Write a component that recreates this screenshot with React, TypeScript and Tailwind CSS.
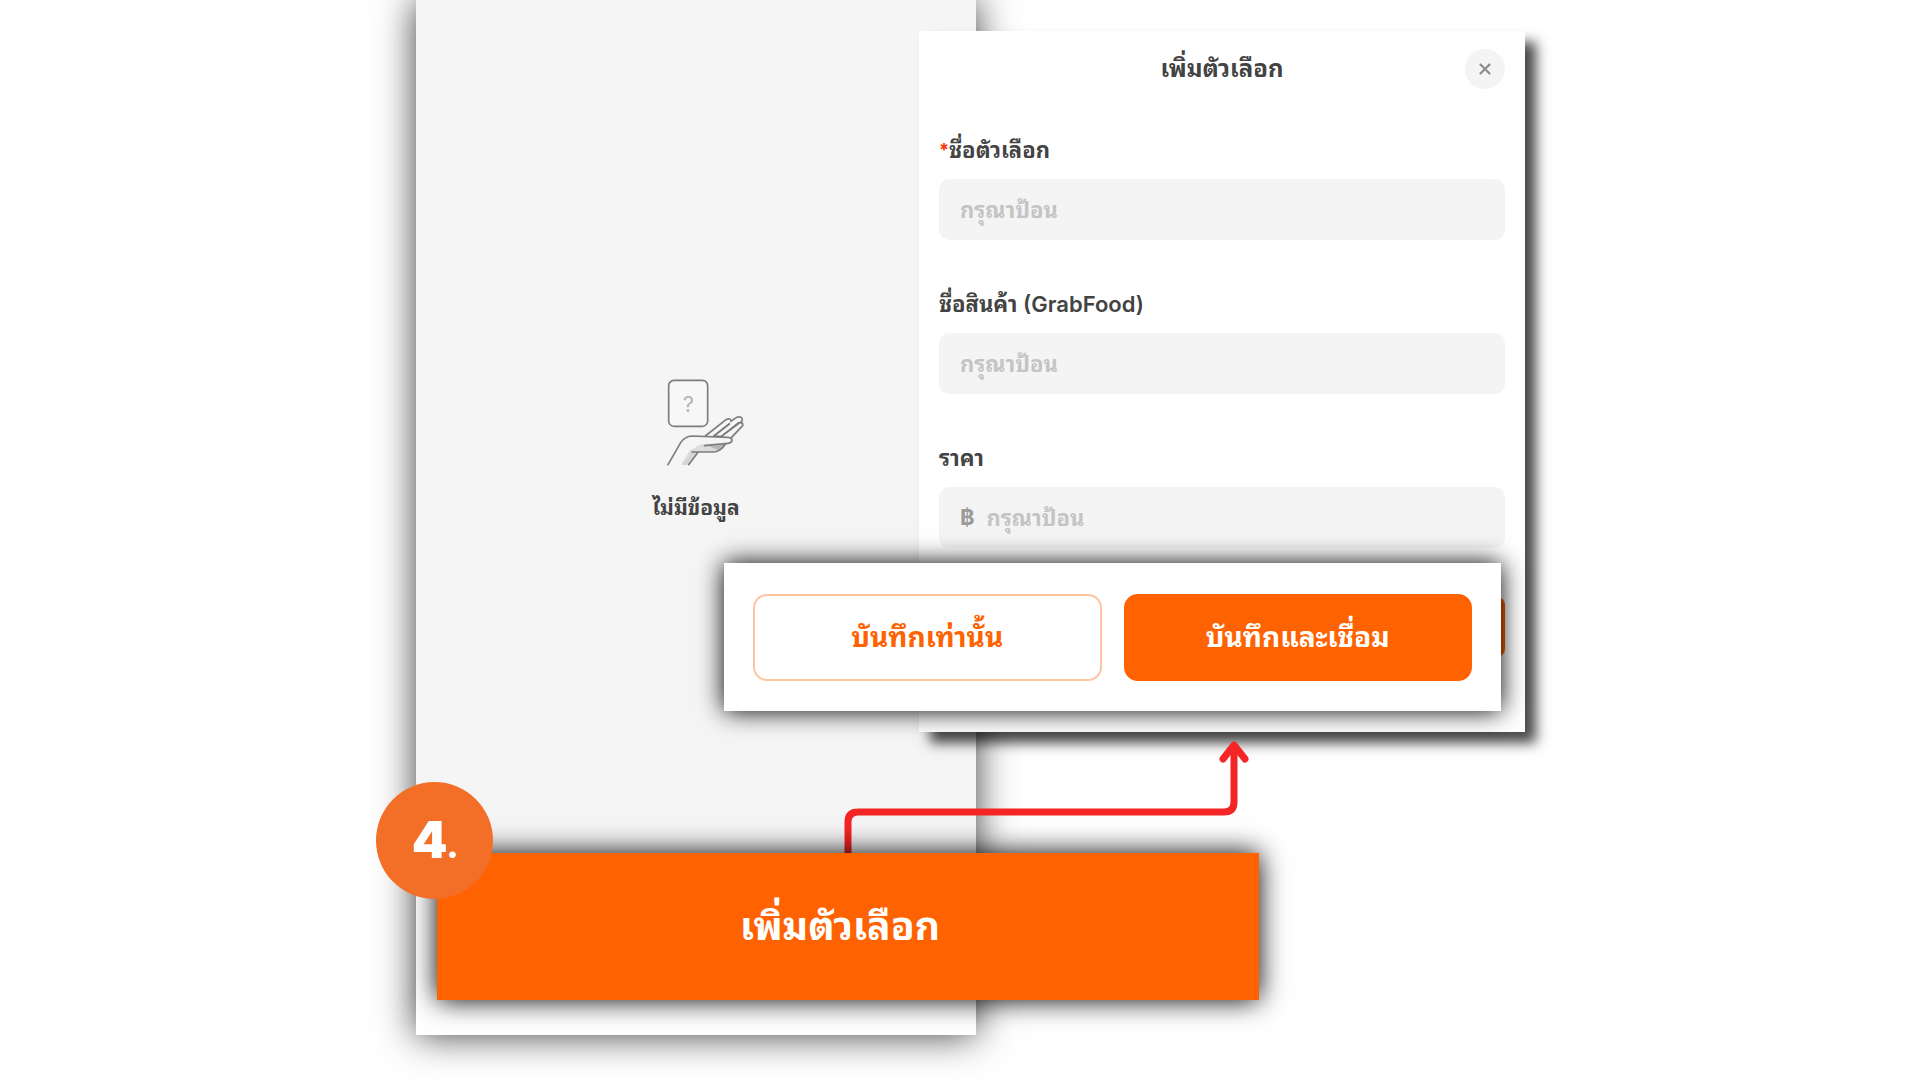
import { X } from 'lucide-react'

const fields = [
  { id: 'option-name', label: 'ชื่อตัวเลือก', required: true },
  { id: 'grabfood-name', label: 'ชื่อสินค้า', note: ' (GrabFood)' },
  { id: 'price', label: 'ราคา', prefix: '฿' },
]

function EmptyIcon() {
  return (
    <svg className="h-[137px] w-[140px]" viewBox="80 0 420 411" fill="none" aria-hidden="true">
      <circle cx="290" cy="206" r="194" fill="#f5f5f5" stroke="#f3f3f3" strokeWidth="3" />
      <rect x="208" y="91" width="117" height="138" rx="16" fill="#f7f7f7" stroke="#7d7d7d" strokeWidth="5" />
      <text x="267" y="186" textAnchor="middle" fontSize="66" fill="#b5b5b5" fontFamily="Inter, sans-serif">
        ?
      </text>
      {/* shading under the palm and on the wrist */}
      <path d="M286 294Q300 280 330 281L384 281Q370 304 344 306H280L262 344H246L272 300Z" fill="#dcdcdc" />
      <path d="M280 306H296L268 344H246Z" fill="#d6d6d6" />
      <path d="M330 288L378 284L358 300Q344 296 330 288Z" fill="#b5b5b5" />
      {/* fingers */}
      <g stroke="#7d7d7d" strokeWidth="5" strokeLinecap="round" strokeLinejoin="round">
        <path d="M318 258L380 209Q392 203 396 213Q396 218 390 222L342 259" fill="#f7f7f7" />
        <path d="M396 213L412 202Q426 197 429 209Q429 214 422 218L366 259L344 258L390 222" fill="#f7f7f7" />
        <path d="M424 217Q432 219 430 227L396 263M366 259L418 218" />
        <path d="M206 344L244 278Q256 259 278 258L386 262Q398 263 398 271Q397 279 386 280L316 287" />
        <path d="M378 282Q364 304 344 306H278M296 307L268 344" />
      </g>
    </svg>
  )
}

function ConnectorArrow() {
  return (
    <svg
      className="pointer-events-none absolute left-[407px] top-[738px] z-10 h-[120px] w-[440px]"
      viewBox="0 0 440 120"
      fill="none"
      stroke="#f42525"
      strokeWidth="7"
      strokeLinecap="round"
      strokeLinejoin="round"
      aria-hidden="true"
    >
      <path d="M25 120V84Q25 74 35 74H401Q411 74 411 64V8" />
      <path d="M400 21L411 7L422 21" />
    </svg>
  )
}

function OptionForm() {
  return (
    <form
      className="relative mt-[31px] w-[606px] -ml-[57px] self-start bg-white px-5 pb-[75px] pt-[18px] shadow-[11px_11px_12px_rgba(0,0,0,0.72)]"
      onSubmit={(e) => e.preventDefault()}
    >
      <header className="grid grid-cols-[40px_1fr_40px] items-center">
        <h2 className="col-start-2 text-center text-2xl font-bold">เพิ่มตัวเลือก</h2>
        <button
          type="button"
          aria-label="ปิด"
          className="flex size-10 items-center justify-center rounded-full bg-[#f4f4f4] text-[#8f8f8f]"
        >
          <X className="size-[18px]" strokeWidth={3} />
        </button>
      </header>

      <div className="mt-[47px] flex flex-col gap-[50px]">
        {fields.map((field) => (
          <div key={field.id} className="flex flex-col gap-[15px]">
            <label htmlFor={field.id} className="flex h-7 items-center whitespace-pre text-[22px] font-bold">
              {field.required && <span className="text-lg text-[#ff3300]">*</span>}
              {field.label}
              {field.note && <span className="font-semibold">{field.note}</span>}
            </label>
            <div className="flex h-[61px] items-center gap-3 rounded-[10px] bg-[#f4f4f4] px-[21px] text-[22px] font-bold">
              {field.prefix && <span className="text-[#9b9b9b]">{field.prefix}</span>}
              <input
                id={field.id}
                type="text"
                placeholder="กรุณาป้อน"
                className="h-full min-w-0 flex-1 bg-transparent outline-none placeholder:text-[#c4c4c4]"
              />
            </div>
          </div>
        ))}
      </div>

      <div className="ml-auto mt-[49px] h-15 w-1/2 rounded-lg bg-[#ff6200]" />

      {/* enlarged action bar */}
      <div className="absolute -left-[195px] right-6 top-[532px] flex h-[148px] items-center gap-[22px] bg-white px-[29px] shadow-[0_0_24px_rgba(0,0,0,1)]">
        <button
          type="button"
          className="h-[87px] flex-1 rounded-[14px] border-2 border-[#ffc4a0] text-[28px] font-bold text-[#ff6200]"
        >
          บันทึกเท่านั้น
        </button>
        <button
          type="submit"
          className="h-[87px] flex-1 rounded-[14px] border-2 border-[#ff6200] bg-[#ff6200] text-[28px] font-bold text-white"
        >
          บันทึกและเชื่อม
        </button>
      </div>
    </form>
  )
}

export default function App() {
  return (
    <main className="min-h-screen overflow-hidden bg-white pl-[21.667%] font-['Inter','Noto_Sans_Thai_Looped','Loma','Noto_Sans_Thai','Noto_Sans',sans-serif] text-[#434343]">
      <div className="relative isolate flex">
        <section className="flex w-[560px] shrink-0 flex-col shadow-[0_0_36px_rgba(0,0,0,0.76)]">
          <div className="flex h-[853px] flex-col items-center bg-[#f5f5f5] pt-[350px]">
            <EmptyIcon />
            <p className="mt-[5px] text-[21px] leading-8 font-bold">ไม่มีข้อมูล</p>
          </div>
          <div className="h-[182px] bg-white" />
        </section>

        <OptionForm />
        <ConnectorArrow />

        <div className="absolute left-[21px] top-[853px] z-20 h-[147px] w-[822px]">
          <button
            type="button"
            className="size-full bg-[#ff6200] pr-4 text-[39px] font-bold text-white shadow-[0_0_26px_rgba(0,0,0,1)]"
          >
            เพิ่มตัวเลือก
          </button>
          <span className="absolute -left-[61px] -top-[71px] flex size-[117px] items-baseline justify-center rounded-full bg-[#f36f28] text-[51px] leading-[115px] font-black text-white">
            4<span className="font-['Lato',sans-serif] text-[40px]">.</span>
          </span>
        </div>
      </div>
    </main>
  )
}
